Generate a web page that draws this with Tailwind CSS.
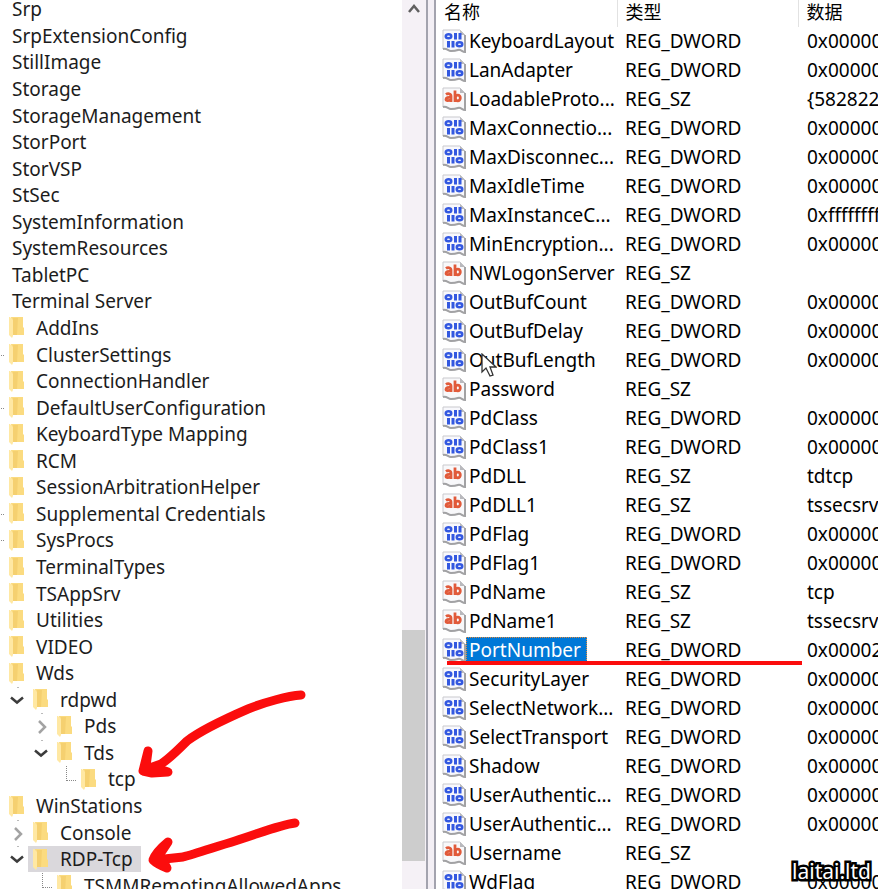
<!DOCTYPE html>
<html lang="zh-CN">
<head>
    <meta charset="UTF-8">
    <meta name="viewport" content="width=device-width, initial-scale=1.0">
    <title>注册表编辑器</title>
    <script src="https://cdn.jsdelivr.net/npm/@tailwindcss/browser@4"></script>
</head>
<body class="bg-white text-[#1c1c1c] font-['Noto_Sans','Noto_Sans_CJK_SC',sans-serif] text-[19px]">

    <!-- Shared icons -->
    <svg class="hidden">
        <symbol id="folder" viewBox="0 0 15 21">
            <path d="M2 0h12v10l1 1v7H4z" fill="#fbdb80"/>
            <path d="M4 1h5l-1 17H4z" fill="#f5d070"/>
            <path d="M0 0h1l3 3v16l-1 2-3-3z" fill="#ffe8a3"/>
        </symbol>
        <symbol id="dword" viewBox="0 0 24 24">
            <path d="M1 1h17l5 5v17c-3 0-4-3-7-2s-4 1-7 1-4-3-8-2z" fill="#f8f8fc" stroke="#c9c9cd"/>
            <path d="M18 1v5h5z" fill="#b9b9bd"/>
            <path d="M1 20c4-1 5 2 8 2s4 0 7-1 4 2 7 2V6" fill="none" stroke="#a2a2a4" stroke-width="2"/>
            <g fill="none" stroke="#3358e0" stroke-width="2.400">
                <ellipse cx="6.500" cy="7.200" rx="2.800" ry="2"/>
                <path d="M13.500 4v6.500M18 4v6.500M6.500 12v6.500M11 12v6.500" stroke-width="3"/>
                <ellipse cx="17.500" cy="15.200" rx="2.800" ry="2"/>
            </g>
        </symbol>
        <symbol id="sz" viewBox="0 0 24 24">
            <path d="M1 1h17l5 5v17c-3 0-4-3-7-2s-4 1-7 1-4-3-8-2z" fill="#f8f8fa" stroke="#c9c9cd"/>
            <path d="M18 1v5h5z" fill="#b9b9bd"/>
            <path d="M1 20c4-1 5 2 8 2s4 0 7-1 4 2 7 2V6" fill="none" stroke="#a2a2a4" stroke-width="2"/>
            <g fill="none" stroke="#e15a3a" stroke-width="2.800">
                <path d="M4 7.500c1.500-1.200 5-1.200 5 1.500v6M9 10.500c-3-.5-5 .2-5 1.800s3 2 5 0"/>
                <path d="M13 3.500v11.500"/>
                <ellipse cx="15.800" cy="11" rx="2.500" ry="2.800"/>
            </g>
        </symbol>
        <symbol id="open" viewBox="0 0 24 26">
            <path d="M14 0v1" stroke="#777"/>
            <path d="M7 10.500l6 5 6-5" fill="none" stroke="#3c3c3c" stroke-width="2.500"/>
        </symbol>
        <symbol id="closed" viewBox="0 0 24 26">
            <path d="M14 0v1" stroke="#777"/>
            <path d="M11 8l6 6-6 6" fill="none" stroke="#a3a3a3" stroke-width="2.500"/>
        </symbol>
        <symbol id="elbow" viewBox="0 0 24 26">
            <path d="M14.500 0v15M15 14.500h10" fill="none" stroke="#888" stroke-dasharray="1 1"/>
        </symbol>
        <symbol id="dash" viewBox="0 0 24 26">
            <path d="M21 13.500h4" stroke="#888" stroke-dasharray="1 1"/>
        </symbol>
    </svg>

    <div class="relative flex h-screen overflow-hidden">

        <!-- Key tree -->
        <nav class="w-[402px] shrink-0 overflow-hidden" aria-label="Keys">
            <ul id="tree" class="grid auto-rows-fr min-h-[903px] -mt-1"></ul>
        </nav>

        <!-- Scrollbar -->
        <div class="w-6 shrink-0 bg-[#f5f1f6] flex flex-col">
            <button type="button" aria-label="Scroll up" class="h-4 flex justify-center items-center">
                <svg class="w-4 h-4" viewBox="0 0 16 16"><path d="M3 12l5-6 5 6" fill="none" stroke="#606060" stroke-width="2.500"/></svg>
            </button>
            <div class="grow-[614]"></div>
            <div class="grow-[231] bg-[#cdcdcd] mr-px"></div>
            <div class="grow-[28]"></div>
        </div>
        <div class="w-[10px] shrink-0 border-x-2 border-[#a3a3ae] bg-[#f3eff5]"></div>

        <!-- Values -->
        <main class="grow min-w-0 overflow-hidden">
            <table class="w-full table-fixed border-collapse whitespace-nowrap text-black">
                <thead>
                    <tr class="h-[27px] text-lg leading-6 text-left">
                        <th scope="col" class="w-[181px] pl-2 p-0 align-top font-normal border-r border-[#e2e2e2]">名称</th>
                        <th scope="col" class="w-[181px] pl-2 p-0 align-top font-normal border-r border-[#e2e2e2]">类型</th>
                        <th scope="col" class="pl-2 p-0 align-top font-normal">数据</th>
                    </tr>
                </thead>
                <tbody id="values"></tbody>
            </table>
        </main>

        <!-- Red marks -->
        <div class="absolute left-[447px] top-[661px] w-[355px] h-1 bg-[#fb0d0d]"></div>
        <svg class="absolute left-[130px] top-[680px] w-[190px] h-[200px]" viewBox="130 680 190 200" fill="#fb0d0d" stroke="#fb0d0d" stroke-width="9" stroke-linecap="round" stroke-linejoin="round">
            <path d="M301 695C288 696 265 702 248 709C225 719 200 731 187 741C176 752 169 759 161 764L144 770" fill="none"/>
            <path d="M148 751L143 771L152 773L168 772L156 768L146 766z"/>
            <path d="M295 823C279 825 258 834 235 841C215 847 195 854 183 857L155 860" fill="none"/>
            <path d="M168 842C162 847 155 854 153 860C157 864 162 866 167 868L163 861L158 857z"/>
        </svg>

        <!-- Mouse pointer -->
        <svg class="absolute left-[481px] top-[353px] w-4 h-6" viewBox="0 0 16 24"><path d="M1 1v18l4-4 4 8 3-1-3-8h6z" fill="#fff" stroke="#333" stroke-width="1.300"/></svg>

        <div class="absolute right-[7px] bottom-[6px] text-[21px] leading-6 text-white font-['Noto_Sans',sans-serif] [-webkit-text-stroke:5px_black] [paint-order:stroke_fill]">laitai.ltd</div>
    </div>

    <script>
        // [level, name, marker in front of the folder]
        const keys = [
            [0, 'Srp'], [0, 'SrpExtensionConfig'], [0, 'StillImage'], [0, 'Storage'],
            [0, 'StorageManagement'], [0, 'StorPort'], [0, 'StorVSP'], [0, 'StSec'],
            [0, 'SystemInformation'], [0, 'SystemResources'], [0, 'TabletPC'], [0, 'Terminal Server'],
            [1, 'AddIns'], [1, 'ClusterSettings', 'dash'], [1, 'ConnectionHandler'],
            [1, 'DefaultUserConfiguration', 'dash'], [1, 'KeyboardType Mapping'], [1, 'RCM'],
            [1, 'SessionArbitrationHelper'], [1, 'Supplemental Credentials', 'dash'],
            [1, 'SysProcs', 'dash'], [1, 'TerminalTypes'], [1, 'TSAppSrv'], [1, 'Utilities'],
            [1, 'VIDEO'], [1, 'Wds'], [2, 'rdpwd', 'open'], [3, 'Pds', 'closed'],
            [3, 'Tds', 'open'], [4, 'tcp', 'elbow'], [1, 'WinStations'],
            [2, 'Console', 'closed'], [2, 'RDP-Tcp', 'open'], [3, 'TSMMRemotingAllowedApps', 'elbow']
        ];
        const indent = ['', '-ml-5', 'ml-1', 'ml-7', 'ml-[52px]'];

        document.getElementById('tree').innerHTML = keys.map(([level, name, mark]) => {
            if (level === 0) return `<li class="flex items-center pl-3 leading-6">${name}</li>`;
            const svg = mark ? `<svg class="w-6 h-[26px]"><use href="#${mark}"/></svg>` : '';
            const slot = mark === 'open' || mark === 'closed'
                ? `<button type="button" class="w-6 shrink-0" aria-label="${name}">${svg}</button>`
                : `<span class="w-6 shrink-0">${svg}</span>`;
            const bg = name === 'RDP-Tcp' ? 'bg-[#dad8dc]' : '';
            return `<li class="flex items-center leading-6">
                <span class="flex items-center h-full ${indent[level]}">${slot}
                <span class="flex items-center h-full gap-3 pl-[5px] pr-2 ${bg}">
                    <svg class="w-[15px] h-[21px] shrink-0"><use href="#folder"/></svg>${name}
                </span></span></li>`;
        }).join('');

        // Name, data, 1 for a string value
        const values = [
            ['KeyboardLayout', '0x00000'], ['LanAdapter', '0x00000'], ['LoadableProto...', '{582822', 1],
            ['MaxConnectio...', '0x00000'], ['MaxDisconnec...', '0x00000'], ['MaxIdleTime', '0x00000'],
            ['MaxInstanceC...', '0xffffffff'], ['MinEncryption...', '0x00000'], ['NWLogonServer', '', 1],
            ['OutBufCount', '0x00000'], ['OutBufDelay', '0x00000'], ['OutBufLength', '0x00000'],
            ['Password', '', 1], ['PdClass', '0x00000'], ['PdClass1', '0x00000'], ['PdDLL', 'tdtcp', 1],
            ['PdDLL1', 'tssecsrv', 1], ['PdFlag', '0x00000'], ['PdFlag1', '0x00000'], ['PdName', 'tcp', 1],
            ['PdName1', 'tssecsrv', 1], ['PortNumber', '0x00002'], ['SecurityLayer', '0x00000'],
            ['SelectNetwork...', '0x00000'], ['SelectTransport', '0x00000'], ['Shadow', '0x00000'],
            ['UserAuthentic...', '0x00000'], ['UserAuthentic...', '0x00000'], ['Username', '', 1],
            ['WdFlag', '0x00000']
        ];

        document.getElementById('values').innerHTML = values.map(([name, data, sz]) => {
            const hl = name === 'PortNumber' ? 'bg-[#0078d7] text-white outline-1 outline-dotted -outline-offset-1 outline-[#e08a3c] pr-[6px]' : '';
            return `<tr class="h-[29px] leading-[27px]">
                <td class="p-0 pl-[6px]"><div class="flex items-center">
                    <svg class="w-6 h-6 shrink-0 mb-px"><use href="#${sz ? 'sz' : 'dword'}"/></svg>
                    <span class="pl-[3px] ${hl}">${name}</span></div></td>
                <td class="p-0 pl-2">${sz ? 'REG_SZ' : 'REG_DWORD'}</td>
                <td class="p-0 pl-[9px]">${data}</td></tr>`;
        }).join('');
    </script>
</body>
</html>
